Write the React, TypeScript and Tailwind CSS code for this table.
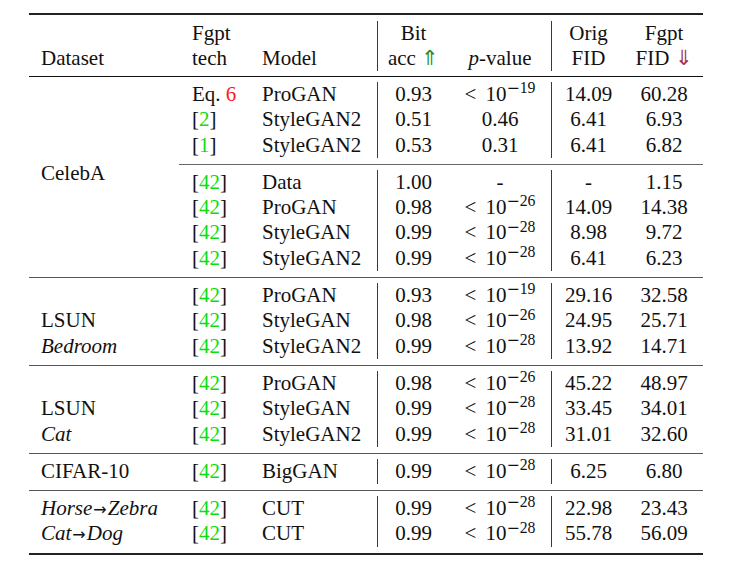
import type { ReactNode } from "react";

// Results table: fingerprint detection across datasets / GANs.

type Row = {
  ds?: ReactNode;
  tech: ReactNode;
  model: string;
  acc: string;
  p: ReactNode;
  orig: string;
  fgpt: string;
};

const cols6 = "grid grid-cols-[71px_127px_72px_102px_74px_78px] auto-rows-[25.3px] leading-[25.3px]";
const cols7 =
  "grid grid-cols-[150px_71px_127px_72px_102px_74px_78px] auto-rows-[25.3px] leading-[25.3px]";

function Cite({ n }: { n: number }) {
  return (
    <>
      [<span className="text-[#10dd10]">{n}</span>]
    </>
  );
}

function Lt({ e }: { e: number }) {
  return (
    <span className="whitespace-nowrap">
      &lt;<span className="ml-[9px]">10</span>
      <sup>
        <span className="font-['DejaVu_Serif',serif] font-light">−</span>
        {e}
      </sup>
    </span>
  );
}

function Arrow() {
  return <span className="font-['DejaVu_Sans',sans-serif] text-[16px] not-italic px-[1px]">→</span>;
}

const c42 = <Cite n={42} />;

const celebA1: Row[] = [
  {
    tech: (
      <>
        Eq. <span className="text-[#ff1a1a]">6</span>
      </>
    ),
    model: "ProGAN",
    acc: "0.93",
    p: <Lt e={19} />,
    orig: "14.09",
    fgpt: "60.28",
  },
  { tech: <Cite n={2} />, model: "StyleGAN2", acc: "0.51", p: "0.46", orig: "6.41", fgpt: "6.93" },
  { tech: <Cite n={1} />, model: "StyleGAN2", acc: "0.53", p: "0.31", orig: "6.41", fgpt: "6.82" },
];

const celebA2: Row[] = [
  { tech: c42, model: "Data", acc: "1.00", p: "-", orig: "-", fgpt: "1.15" },
  { tech: c42, model: "ProGAN", acc: "0.98", p: <Lt e={26} />, orig: "14.09", fgpt: "14.38" },
  { tech: c42, model: "StyleGAN", acc: "0.99", p: <Lt e={28} />, orig: "8.98", fgpt: "9.72" },
  { tech: c42, model: "StyleGAN2", acc: "0.99", p: <Lt e={28} />, orig: "6.41", fgpt: "6.23" },
];

const groups: Row[][] = [
  [
    { tech: c42, model: "ProGAN", acc: "0.93", p: <Lt e={19} />, orig: "29.16", fgpt: "32.58" },
    { ds: "LSUN", tech: c42, model: "StyleGAN", acc: "0.98", p: <Lt e={26} />, orig: "24.95", fgpt: "25.71" },
    { ds: <i>Bedroom</i>, tech: c42, model: "StyleGAN2", acc: "0.99", p: <Lt e={28} />, orig: "13.92", fgpt: "14.71" },
  ],
  [
    { tech: c42, model: "ProGAN", acc: "0.98", p: <Lt e={26} />, orig: "45.22", fgpt: "48.97" },
    { ds: "LSUN", tech: c42, model: "StyleGAN", acc: "0.99", p: <Lt e={28} />, orig: "33.45", fgpt: "34.01" },
    { ds: <i>Cat</i>, tech: c42, model: "StyleGAN2", acc: "0.99", p: <Lt e={28} />, orig: "31.01", fgpt: "32.60" },
  ],
  [{ ds: "CIFAR-10", tech: c42, model: "BigGAN", acc: "0.99", p: <Lt e={28} />, orig: "6.25", fgpt: "6.80" }],
  [
    {
      ds: (
        <>
          <i>Horse</i>
          <Arrow />
          <i>Zebra</i>
        </>
      ),
      tech: c42,
      model: "CUT",
      acc: "0.99",
      p: <Lt e={28} />,
      orig: "22.98",
      fgpt: "23.43",
    },
    {
      ds: (
        <>
          <i>Cat</i>
          <Arrow />
          <i>Dog</i>
        </>
      ),
      tech: c42,
      model: "CUT",
      acc: "0.99",
      p: <Lt e={28} />,
      orig: "55.78",
      fgpt: "56.09",
    },
  ],
];

function Cells({ r }: { r: Row }) {
  return (
    <>
      <div className="pl-[13px] whitespace-nowrap">{r.tech}</div>
      <div className="pl-[12px] whitespace-nowrap">{r.model}</div>
      <div className="border-l border-[#3a3a3a] text-center">{r.acc}</div>
      <div className="text-center">{r.p}</div>
      <div className="border-l border-[#3a3a3a] text-center">{r.orig}</div>
      <div className="text-center">{r.fgpt}</div>
    </>
  );
}

export default function App() {
  return (
    <div className="w-[733px] h-[567px] bg-white pt-[13px] pl-[29px] font-['Liberation_Serif',serif] text-[21px] text-[#111]">
      <div className="w-[674px] border-t-2 border-b-2 border-[#222]">
        {/* header */}
        <div className="pt-[6px] pb-[5px] border-b border-[#111]">
          <div className="grid grid-cols-[150px_71px_127px_72px_102px_74px_78px] auto-rows-[25px] leading-[25px]">
            <div />
            <div className="pl-[13px]">Fgpt</div>
            <div />
            <div className="border-l border-[#3a3a3a] text-center">Bit</div>
            <div />
            <div className="border-l border-[#3a3a3a] text-center">Orig</div>
            <div className="text-center">Fgpt</div>

            <div className="pl-[12px]">Dataset</div>
            <div className="pl-[13px]">tech</div>
            <div className="pl-[12px]">Model</div>
            <div className="border-l border-[#3a3a3a] text-center">
              acc <span className="text-[#1f8f1f]">⇑</span>
            </div>
            <div className="text-center">
              <i>p</i>-value
            </div>
            <div className="border-l border-[#3a3a3a] text-center">FID</div>
            <div className="text-center">
              FID <span className="text-[#a33058]">⇓</span>
            </div>
          </div>
        </div>

        {/* CelebA: two sub-blocks sharing one label */}
        <div className="flex">
          <div className="w-[150px] pl-[12px] pb-[6px] flex items-center">CelebA</div>
          <div className="w-[524px]">
            <div className="pt-[5px] pb-[6px]">
              <div className={cols6}>
                {celebA1.map((r, i) => (
                  <Cells key={i} r={r} />
                ))}
              </div>
            </div>
            <div className="pt-[5px] pb-[6px] border-t border-[#666]">
              <div className={cols6}>
                {celebA2.map((r, i) => (
                  <Cells key={i} r={r} />
                ))}
              </div>
            </div>
          </div>
        </div>

        {groups.map((g, gi) => (
          <div key={gi} className="pt-[5px] pb-[6px] border-t border-[#555]">
            <div className={cols7}>
              {g.map((r, i) => (
                <div key={i} className="contents">
                  <div className="pl-[12px] whitespace-nowrap">{r.ds}</div>
                  <Cells r={r} />
                </div>
              ))}
            </div>
          </div>
        ))}
      </div>
    </div>
  );
}
